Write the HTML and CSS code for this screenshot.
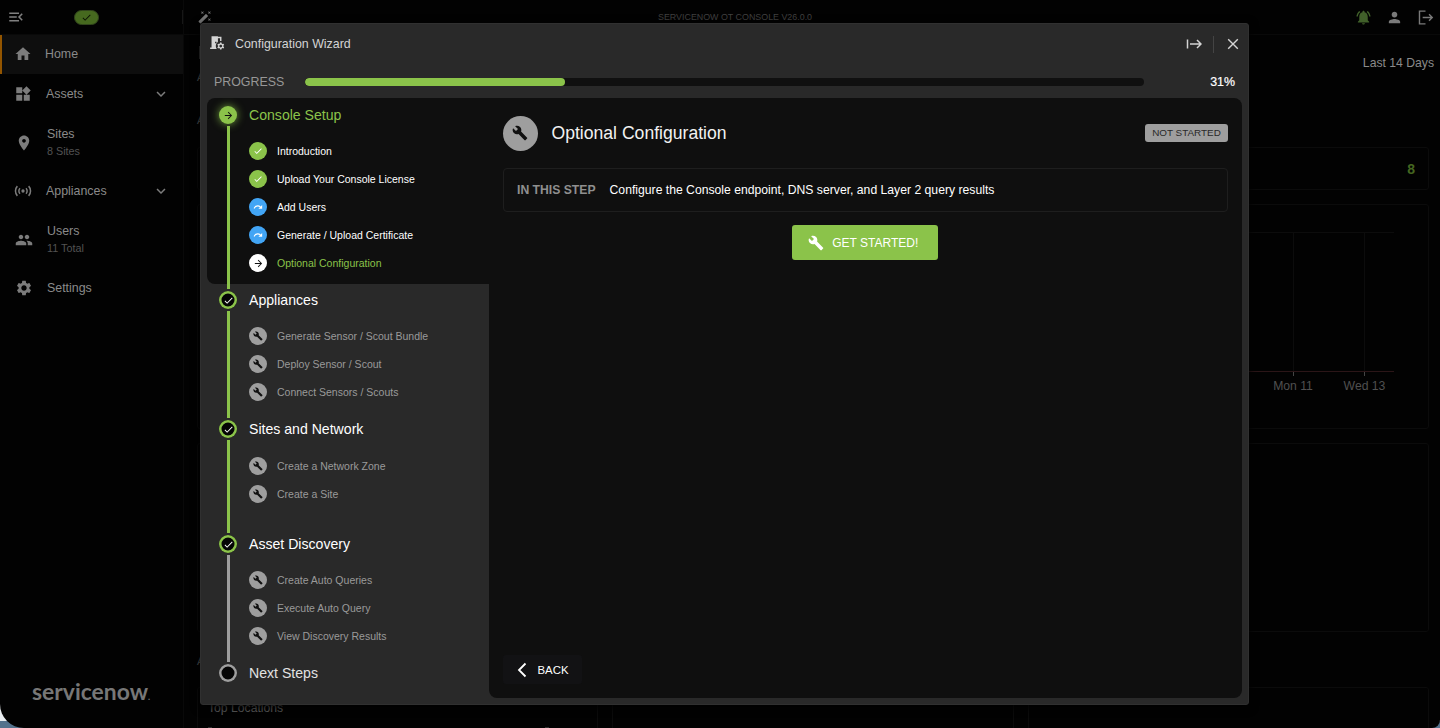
FILE: index.html
```html
<!DOCTYPE html>
<html lang="en">
<head>
<meta charset="utf-8">
<title>Configuration Wizard</title>
<link rel="stylesheet" href="styles.css">
</head>
<body>
<svg class="defs" aria-hidden="true">
  <symbol id="wrench" viewBox="0 0 24 24"><path d="M22.7 19l-9.1-9.1c.9-2.3.4-5-1.5-6.9-2-2-5-2.4-7.4-1.3L9 6 6 9 1.6 4.7C.4 7.1.9 10.1 2.9 12.1c1.9 1.9 4.6 2.4 6.9 1.5l9.1 9.1c.4.4 1 .4 1.4 0l2.3-2.3c.5-.4.5-1.1.1-1.4z"/></symbol>
  <symbol id="check" viewBox="0 0 24 24"><path d="M9 16.17 4.83 12l-1.42 1.41L9 19 21 7l-1.41-1.41z"/></symbol>
  <symbol id="arrow" viewBox="0 0 24 24"><path d="M4 11v2h12l-5.5 5.5 1.42 1.42L19.84 12l-7.92-7.92L10.5 5.5 16 11z"/></symbol>
  <symbol id="redo" viewBox="0 0 24 24"><path d="M18.4 10.6C16.55 8.99 14.15 8 11.5 8c-4.65 0-8.58 3.03-9.96 7.22L3.9 16c1.05-3.19 4.05-5.5 7.6-5.5 1.95 0 3.73.72 5.12 1.88L13 16h9V7l-3.6 3.6z"/></symbol>
  <symbol id="chevron" viewBox="0 0 24 24"><path d="M7.41 8.59 12 13.17l4.59-4.58L18 10l-6 6-6-6z"/></symbol>
</svg>
<div class="app">
  <aside class="side">
    <div class="side-top">
      <svg class="i-menu" viewBox="0 0 24 24"><path d="M3 18h13v-2H3v2zM3 13h10v-2H3v2zm0-7v2h13V6H3zm18 9.59L17.42 12 21 8.41 19.59 7l-5 5 5 5L21 15.59z"/></svg>
      <span class="status"><svg viewBox="0 0 24 24"><use href="#check"/></svg></span>
      <i class="side-sep"></i>
    </div>
    <nav>
      <div class="nav-row active"><svg viewBox="0 0 24 24"><path d="M10 20v-6h4v6h5v-8h3L12 3 2 12h3v8z"/></svg><span>Home</span></div>
      <div class="nav-row"><svg viewBox="0 0 24 24"><path d="M13 13v8h8v-8h-8zM3 21h8v-8H3v8zM3 3v8h8V3H3zm13.66-1.31L11 7.34 16.66 13l5.66-5.66-5.66-5.65z"/></svg><span>Assets</span><svg class="chev" viewBox="0 0 24 24"><use href="#chevron"/></svg></div>
      <div class="nav-row tall"><svg viewBox="0 0 24 24"><path d="M12 2C8.13 2 5 5.13 5 9c0 5.25 7 13 7 13s7-7.75 7-13c0-3.87-3.13-7-7-7zm0 9.5c-1.38 0-2.5-1.12-2.5-2.5s1.12-2.5 2.5-2.5 2.5 1.12 2.5 2.5-1.12 2.5-2.5 2.5z"/></svg><span>Sites<small>8 Sites</small></span></div>
      <div class="nav-row"><svg viewBox="0 0 24 24" class="stroke"><path d="M4.500 5.500C1.100 9 1.100 15 4.500 18.500M8 8.300c-2 2-2 5.400 0 7.400M19.500 5.500c3.400 3.500 3.400 9.500 0 13M16 8.300c2 2 2 5.400 0 7.400"/><circle cx="12" cy="12" r="1.200"/></svg><span>Appliances</span><svg class="chev" viewBox="0 0 24 24"><use href="#chevron"/></svg></div>
      <div class="nav-row tall"><svg viewBox="0 0 24 24"><path d="M16 11c1.660 0 2.990-1.340 2.990-3S17.660 5 16 5c-1.660 0-3 1.340-3 3s1.340 3 3 3zm-8 0c1.660 0 2.990-1.340 2.990-3S9.660 5 8 5C6.340 5 5 6.340 5 8s1.340 3 3 3zm0 2c-2.330 0-7 1.170-7 3.500V19h14v-2.500c0-2.330-4.670-3.500-7-3.500zm8 0c-.29 0-.62.02-.97.05 1.160.84 1.970 1.970 1.970 3.450V19h6v-2.500c0-2.330-4.670-3.500-7-3.500z"/></svg><span>Users<small>11 Total</small></span></div>
      <div class="nav-row set"><svg viewBox="0 0 24 24"><path d="M19.140 12.940c.04-.3.06-.61.06-.94 0-.32-.02-.64-.07-.94l2.030-1.580c.18-.14.23-.41.12-.61l-1.920-3.320c-.12-.22-.37-.29-.59-.22l-2.390.96c-.5-.38-1.030-.7-1.620-.94l-.36-2.540c-.04-.24-.24-.41-.48-.41h-3.840c-.24 0-.43.17-.47.41l-.36 2.540c-.59.24-1.130.57-1.620.94l-2.390-.96c-.22-.08-.47 0-.59.22L2.740 8.870c-.12.21-.08.47.12.61l2.030 1.580c-.05.3-.09.63-.09.94s.02.64.07.94l-2.030 1.580c-.18.14-.23.41-.12.61l1.920 3.320c.12.22.37.29.59.22l2.390-.96c.5.38 1.030.7 1.620.94l.36 2.540c.05.24.24.41.48.41h3.840c.24 0 .44-.17.47-.41l.36-2.540c.59-.24 1.130-.56 1.620-.94l2.390.96c.22.08.47 0 .59-.22l1.920-3.320c.12-.22.07-.47-.12-.61l-2.010-1.580zM12 15.600c-1.980 0-3.600-1.620-3.600-3.600s1.620-3.600 3.600-3.600 3.600 1.620 3.600 3.600-1.620 3.600-3.600 3.600z"/></svg><span>Settings</span></div>
    </nav>
    <div class="brand">servicenow<sup>.</sup></div>
  </aside>
  <main class="main">
    <header class="top">
      <svg class="wand" viewBox="0 0 24 24"><path d="M7.500 5.600L5 7l1.400-2.500L5 2l2.500 1.400L10 2 8.600 4.500 10 7 7.500 5.600zm12 9.800L22 14l-1.400 2.500L22 19l-2.500-1.400L17 19l1.400-2.500L17 14l2.500 1.400zM22 2l-1.400 2.500L22 7l-2.500-1.400L17 7l1.400-2.500L17 2l2.500 1.400L22 2zm-7.630 5.290c-.39-.39-1.020-.39-1.410 0L1.290 18.960c-.39.39-.39 1.020 0 1.410l2.340 2.340c.39.39 1.020.39 1.410 0L16.700 11.050c.39-.39.39-1.020 0-1.410l-2.330-2.350z"/></svg>
      <span class="top-title">SERVICENOW OT CONSOLE V26.0.0</span>
      <div class="top-icons">
        <svg class="bell" viewBox="0 0 24 24"><path d="M7.580 4.080L6.150 2.650C3.750 4.480 2.170 7.300 2.030 10.500h2c.15-2.650 1.510-4.970 3.550-6.420zm12.390 6.420h2c-.15-3.200-1.730-6.020-4.120-7.850l-1.420 1.430c2.020 1.450 3.390 3.770 3.540 6.420zM18 11c0-3.070-1.640-5.640-4.500-6.320V4c0-.83-.67-1.500-1.500-1.500s-1.500.67-1.500 1.500v.68C7.630 5.360 6 7.920 6 11v5l-2 2v1h16v-1l-2-2v-5zm-6 11c.14 0 .27-.01.4-.04.65-.14 1.180-.58 1.440-1.180.1-.24.15-.5.15-.78h-4c.01 1.100.9 2 2.010 2z"/></svg>
        <svg viewBox="0 0 24 24"><path d="M12 12c2.210 0 4-1.790 4-4s-1.790-4-4-4-4 1.790-4 4 1.790 4 4 4zm0 2c-2.670 0-8 1.340-8 4v2h16v-2c0-2.660-5.330-4-8-4z"/></svg>
        <svg viewBox="0 0 24 24" class="stroke out"><path d="M12 3H3.500v18H12M8 12h13.500M17 7.500l4.500 4.500-4.500 4.500"/></svg>
      </div>
    </header>
    <div class="period">Last 14 Days</div>
    <section class="card count">8</section>
    <section class="card chart">
      <svg viewBox="0 0 200 224" width="200" height="224">
        <path class="grid" d="M20 27.500h146M65.500 27v140M136.500 27v140"/>
        <path class="axis" d="M20 166.500h146"/>
        <path class="tick" d="M65.500 167v4M136.500 167v4"/>
        <text x="65" y="185">Mon 11</text><text x="136.500" y="185">Wed 13</text>
      </svg>
    </section>
    <section class="card mid"></section>
    <div class="bottom">
      <section class="card"><h4>Top Locations</h4><div class="th"><i></i><i></i></div></section>
      <section class="card"></section>
      <section class="card"></section>
    </div>
  </main>
</div>

<div class="peek p1">A</div><div class="peek p2">A</div><div class="peek p3">A</div><div class="peek p4"></div>

<div class="modal">
  <header class="m-head">
    <svg class="room" viewBox="0 0 24 24"><path d="M14 11.260V6h3v4h2V4h-5V3H5v16H3v2h9.260C11.470 19.870 11 18.490 11 17c0-2.380 1.190-4.470 3-5.740zM10 11h2v2h-2v-2zm11.690 5.370 1.140-1-1-1.730-1.450.49c-.32-.27-.68-.48-1.080-.63L19 12h-2l-.3 1.490c-.4.15-.76.36-1.080.63l-1.450-.49-1 1.730 1.140 1c-.08.5-.08.76 0 1.260l-1.140 1 1 1.730 1.450-.49c.32.27.68.48 1.080.63L17 22h2l.3-1.490c.4-.15.76-.36 1.080-.63l1.450.49 1-1.730-1.140-1c.08-.51.08-.77 0-1.270zM18 19c-1.100 0-2-.9-2-2s.9-2 2-2 2 .9 2 2-.9 2-2 2z"/></svg>
    <span class="m-title">Configuration Wizard</span>
    <svg class="from" viewBox="0 0 16 16"><path d="M1.500 3.500v9M4 8h11M11 4l4 4-4 4"/></svg>
    <i class="m-sep"></i>
    <svg class="close" viewBox="0 0 12 12"><path d="M1.200 1.200l9.600 9.600M10.800 1.200l-9.600 9.600"/></svg>
  </header>
  <div class="progress"><span class="p-label">PROGRESS</span><div class="bar"><div class="fill" style="width:31%"></div></div><span class="pct">31%</span></div>
  <div class="m-body">
    <div class="steps">
      <section class="step s1 current">
        <div class="rail"><span class="dot"><svg><use href="#arrow"/></svg></span><i class="line"></i></div>
        <div class="list"><h3>Console Setup</h3>
          <p><b class="g"><svg><use href="#check"/></svg></b>Introduction</p>
          <p><b class="g"><svg><use href="#check"/></svg></b>Upload Your Console License</p>
          <p><b class="bl"><svg><use href="#redo"/></svg></b>Add Users</p>
          <p><b class="bl"><svg><use href="#redo"/></svg></b>Generate / Upload Certificate</p>
          <p class="here"><b class="w"><svg><use href="#arrow"/></svg></b>Optional Configuration</p>
        </div>
      </section>
      <section class="step s2">
        <div class="rail"><span class="dot"><svg><use href="#check"/></svg></span><i class="line"></i></div>
        <div class="list"><h3>Appliances</h3>
          <p><b><svg><use href="#wrench"/></svg></b>Generate Sensor / Scout Bundle</p>
          <p><b><svg><use href="#wrench"/></svg></b>Deploy Sensor / Scout</p>
          <p><b><svg><use href="#wrench"/></svg></b>Connect Sensors / Scouts</p>
        </div>
      </section>
      <section class="step s3">
        <div class="rail"><span class="dot"><svg><use href="#check"/></svg></span><i class="line"></i></div>
        <div class="list"><h3>Sites and Network</h3>
          <p><b><svg><use href="#wrench"/></svg></b>Create a Network Zone</p>
          <p><b><svg><use href="#wrench"/></svg></b>Create a Site</p>
        </div>
      </section>
      <section class="step s4">
        <div class="rail"><span class="dot"><svg><use href="#check"/></svg></span><i class="line grey"></i></div>
        <div class="list"><h3>Asset Discovery</h3>
          <p><b><svg><use href="#wrench"/></svg></b>Create Auto Queries</p>
          <p><b><svg><use href="#wrench"/></svg></b>Execute Auto Query</p>
          <p><b><svg><use href="#wrench"/></svg></b>View Discovery Results</p>
        </div>
      </section>
      <section class="step s5">
        <div class="rail"><span class="dot grey"></span></div>
        <div class="list"><h3>Next Steps</h3></div>
      </section>
    </div>
    <div class="content">
      <div class="c-head"><span class="c-icon"><svg><use href="#wrench"/></svg></span><h2>Optional Configuration</h2><span class="chip">NOT STARTED</span></div>
      <div class="info"><strong>IN THIS STEP</strong><span>Configure the Console endpoint, DNS server, and Layer 2 query results</span></div>
      <button class="start"><svg><use href="#wrench"/></svg>GET STARTED!</button>
      <button class="back"><svg viewBox="0 0 10 16"><path d="M8.500 1.500L2 8l6.500 6.500"/></svg>BACK</button>
    </div>
  </div>
</div>
</body>
</html>
```

FILE: styles.css
```css
* { box-sizing: border-box; }
body {
  margin: 0;
  width: 1440px;
  height: 728px;
  overflow: hidden;
  position: relative;
  background: linear-gradient(#e8ecef 721px, #54728c 721px);
  font-family: "Liberation Sans", Arial, sans-serif;
  font-size: 12.4px;
  color: #8a8a8a;
}
svg { fill: currentColor; flex: none; display: block; }
.defs { position: absolute; width: 0; height: 0; }
.stroke { fill: none; stroke: currentColor; stroke-width: 2; }
h2, h3, h4, p { margin: 0; font-weight: 400; }

.app {
  display: flex;
  height: 728px;
  background: #020202;
  border-radius: 0 0 8px 24px;
  overflow: hidden;
}

/* Sidebar */
.side { width: 184px; border-right: 1px solid #090909; display: flex; flex-direction: column; flex: none; }
.side-top { height: 35px; display: flex; align-items: center; padding-left: 7px; border-bottom: 1px solid #090909; }
.i-menu { width: 18px; height: 18px; color: #808080; }
.status { margin-left: 49px; width: 26px; height: 15px; border-radius: 8px; background: #46691f; border: 1px solid #31451c; display: flex; align-items: center; justify-content: center; color: #0b1203; }
.status svg { width: 11px; height: 11px; }
.side-sep { margin-left: 83px; width: 1px; height: 14px; background: #171717; }
.nav-row { height: 39px; display: flex; align-items: center; padding-left: 14px; }
.nav-row > svg { width: 18px; height: 18px; color: #7c7c7c; }
.nav-row > span { margin-left: 14px; flex: 1; }
.nav-row.active { background: #0e0e0e; border-left: 2px solid #935500; padding: 0 0 1px 12px; }
.nav-row.active > span { margin-left: 13px; }
.nav-row.tall { height: 58px; padding-left: 15px; padding-top: 1px; }
.nav-row.set { padding-left: 15px; }
.nav-row small { display: block; font-size: 10.8px; color: #525252; margin-top: 4px; line-height: 13px; }
.nav-row > .chev { width: 18px; height: 18px; margin-right: 13px; }
.brand { margin: auto 0 16px 32px; font: 700 22.9px/30px Lato, sans-serif; color: #777; white-space: nowrap; }
.brand sup { font-size: 9px; vertical-align: baseline; }

/* Dashboard */
.main { flex: 1; min-width: 0; display: flex; flex-direction: column; }
.top { height: 35px; flex: none; display: flex; align-items: center; border-bottom: 1px solid #090909; padding: 0 6px 0 14px; }
.wand { width: 14px; height: 14px; color: #777; }
.top-title { margin-left: 446px; font-size: 8.9px; color: #404040; white-space: nowrap; }
.top-icons { margin-left: auto; display: flex; gap: 14px; color: #7a7a7a; }
.top-icons svg { width: 17px; height: 17px; }
.top-icons .bell { color: #41602a; }
.period { height: 112px; padding: 21px 6px 0; text-align: right; font-size: 12.2px; line-height: 14px; flex: none; }
.card { border: 1px solid #0b0b0b; border-radius: 3px; margin: 0 11px 0 13px; flex: none; }
.count { height: 43px; color: #456620; font-weight: 700; font-size: 14px; text-align: right; padding: 13px 13px 0; line-height: 16px; }
.chart { margin-top: 14px; height: 225px; display: flex; justify-content: flex-end; }
.chart text { font-size: 12.2px; text-anchor: middle; fill: #505050; }
.grid { stroke: #0c0c0c; fill: none; }
.axis { stroke: #2b1517; }
.tick { stroke: #444; }
.mid { margin-top: 14px; height: 189px; }
.bottom { margin: 55px 11px 0 13px; display: grid; grid-template-columns: repeat(3, 1fr); gap: 14px; height: 60px; flex: none; }
.bottom .card { margin: 0; }
.bottom h4 { padding: 13px 0 0 10px; font-size: 12.2px; line-height: 14px; color: #5c5c5c; }
.th { display: flex; justify-content: space-between; padding: 12px 48px 0 10px; }
.th i { width: 4px; height: 3px; background: #303030; }

.peek { position: absolute; left: 197px; font-size: 11px; line-height: 12px; color: #555; }
.p1 { top: 71px; }
.p2 { top: 114px; }
.p3 { top: 655px; }
.p4 { top: 46px; left: 199px; width: 2px; height: 13px; background: #333; }

/* Wizard */
.modal {
  position: absolute;
  left: 200px;
  top: 23px;
  width: 1049px;
  height: 682px;
  background: #292929;
  border: 1px solid #303030;
  border-radius: 3px;
  box-shadow: 0 2px 10px #000;
  padding: 0 6px;
}
.m-head { height: 40px; display: flex; align-items: center; color: #d4d4d4; padding-right: 3px; }
.room { width: 17px; height: 17px; margin: -4px 0 0 1px; }
.m-title { margin-left: 10px; flex: 1; }
.from { width: 16px; height: 16px; fill: none; stroke: currentColor; stroke-width: 1.5; }
.m-sep { width: 1px; height: 17px; background: #444; margin: 0 13px 0 11px; }
.close { width: 12px; height: 12px; fill: none; stroke: currentColor; stroke-width: 1.4; }
.progress { height: 34px; display: flex; align-items: center; padding: 2px 7px 0; color: #979797; }
.p-label { width: 91px; }
.bar { width: 839px; height: 8px; border-radius: 4px; background: #101010; overflow: hidden; }
.fill { height: 8px; border-radius: 4px; background: #8bc34a; }
.pct { margin-left: auto; color: #fff; -webkit-text-stroke: .2px; }
.m-body { display: flex; height: 600px; }

.steps { width: 281.500px; flex: none; }
.step { display: flex; padding-left: 12px; color: #9a9a9a; }
.s1 { height: 186px; padding-top: 8px; background: #0f0f0f; border-radius: 8px 0 0 8px; }
.s2 { height: 137px; padding-top: 7px; margin-bottom: -7px; }
.s3 { height: 121px; padding-top: 6px; margin-bottom: -7px; }
.s4 { height: 136px; padding-top: 7px; margin-bottom: -7px; }
.s5 { padding-top: 7px; }
.rail { width: 18px; display: flex; flex-direction: column; align-items: center; flex: none; }
.dot { width: 18px; height: 18px; border-radius: 50%; background: #050505; box-shadow: inset 0 0 0 2.500px #8bc34a; color: #fff; display: flex; align-items: center; justify-content: center; flex: none; }
.dot svg { width: 11px; height: 11px; }
.dot.grey { box-shadow: inset 0 0 0 2.500px #9e9e9e; }
.current .dot { background: #8bc34a; color: #111; box-shadow: 0 0 8px #8bc34acc; }
.line { width: 3px; flex: 1; margin: 2px 0 4px; background: #8bc34a; }
.s1 .line { margin-bottom: -5px; }
.s2 .line { margin-bottom: 3px; }
.s3 .line, .s4 .line { margin-bottom: 2px; }
.line.grey { background: #9e9e9e; }
.list { margin-left: 12px; }
.list h3 { font-size: 14.1px; line-height: 19px; color: #fff; margin-bottom: 12px; }
.current h3, .here { color: #8bc34a !important; }
.s5 h3 { color: #e2e2e2; }
.list p { height: 28px; display: flex; align-items: center; font-size: 10.5px; white-space: nowrap; }
.current p { color: #fff; }
.list b { width: 18px; height: 18px; border-radius: 50%; background: #9e9e9e; color: #111; display: flex; align-items: center; justify-content: center; margin-right: 10px; }
.list b svg { width: 10px; height: 10px; }
.list .g { background: #8bc34a; color: #fff; }
.list .bl { background: #42a5f5; color: #fff; }
.list .w { background: #fff; color: #111; }
.list .w svg { width: 11px; height: 11px; }
.s3 h3 { margin-bottom: 13px; }

.content { flex: 1; background: #0f0f0f; border-radius: 0 8px 8px 8px; padding: 17px 14px 14px; display: flex; flex-direction: column; }
.content { border-top-left-radius: 0; }
.c-head { height: 36px; display: flex; align-items: center; }
.c-icon { width: 35px; height: 35px; border-radius: 50%; background: #9e9e9e; color: #111; display: flex; align-items: center; justify-content: center; }
.c-icon svg { width: 16px; height: 16px; }
.c-head h2 { flex: 1; margin-left: 14px; font-size: 17.6px; color: #f2f2f2; }
.chip { width: 83px; height: 18px; line-height: 18px; border-radius: 3px; background: #9e9e9e; color: #292929; font-size: 9.9px; text-align: center; white-space: nowrap; }
.info { margin-top: 17px; height: 44px; border: 1px solid #1e1e1e; border-radius: 4px; display: flex; align-items: center; padding-left: 13.500px; font-size: 12.2px; flex: none; }
.info strong { color: #8f8f8f; }
.info span { margin-left: 14px; color: #fff; }
button { border: 0; font-family: inherit; color: #fff; display: flex; align-items: center; padding: 0; white-space: nowrap; }
.start { align-self: center; margin-top: 13px; width: 146px; height: 35px; border-radius: 3px; background: #8bc34a; font-size: 12px; padding-left: 16px; gap: 8px; }
.start svg { width: 16px; height: 16px; }
.back { margin-top: auto; width: 79px; height: 29px; border-radius: 3px; background: #121214; font-size: 11.400px; padding-left: 14px; gap: 11px; }
.back svg { width: 10px; height: 16px; fill: none; stroke: currentColor; stroke-width: 1.800; }
```
